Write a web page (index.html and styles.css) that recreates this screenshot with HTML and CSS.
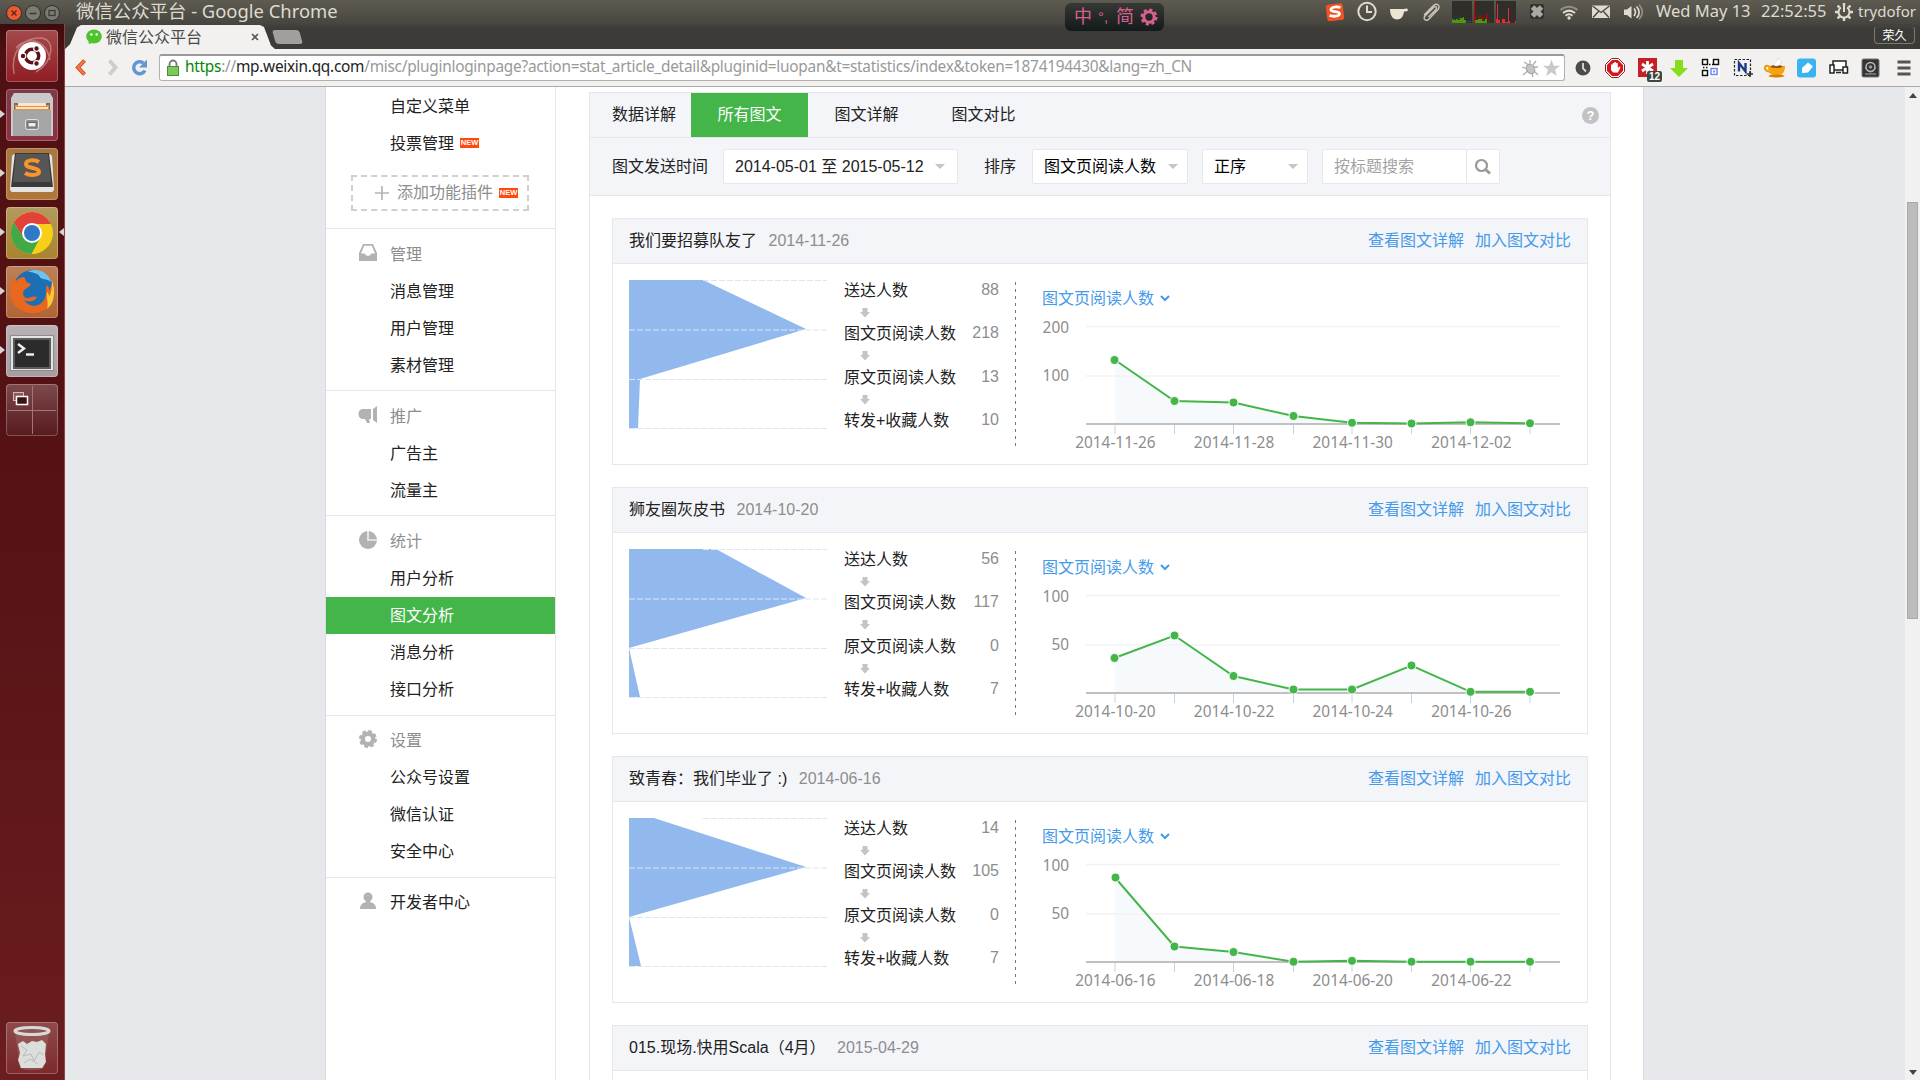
FILE: index.html
```html
<!DOCTYPE html>
<html lang="zh-CN">
<head>
<meta charset="utf-8">
<title>微信公众平台</title>
<link rel="stylesheet" href="styles.css">
</head>
<body>
<svg class="defs" width="0" height="0" aria-hidden="true">
  <symbol id="down" viewBox="0 0 10 10"><path d="M2.500 0h5v4H10L5 9.500 0 4h2.500z" fill="#c4c4c4"/></symbol>
  <symbol id="chev" viewBox="0 0 10 7"><path d="M1 1l4 4 4-4" fill="none" stroke="#459ae9" stroke-width="2"/></symbol>
  <symbol id="grid" viewBox="0 0 198 150"><path d="M74 .5h124M0 50h198M0 99.500h198M0 148.500h198" stroke="#dfe4f5" stroke-width="1.200" stroke-dasharray="6 2"/></symbol>
  <symbol id="axes" viewBox="0 0 476 112">
    <path d="M1 3.500h474M1 53h474" stroke="#f2f2f3" stroke-width="1.500"/>
    <path d="M30 102v9M89.500 102v9M148.500 102v9M208.500 102v9M267 102v9M326.500 102v9M385.500 102v9M445 102v9" stroke="#c3d2e4"/>
    <path d="M1 101h474" stroke="#c0c0c0" stroke-width="2"/>
  </symbol>
</svg>

<header class="panel">
  <div class="winbtns">
    <svg width="56" height="20" viewBox="0 0 56 20"><circle cx="10" cy="9" r="7.500" fill="#ea5c30" stroke="#33302b"/><path d="M7.500 6.500l5 5m0-5l-5 5" stroke="#5b2413" stroke-width="1.300"/><circle cx="29" cy="9" r="7.500" fill="#7d7a72" stroke="#33302b"/><path d="M25.500 9.500h7" stroke="#3c3b37" stroke-width="1.500"/><circle cx="48" cy="9" r="7.500" fill="#7d7a72" stroke="#33302b"/><rect x="45" y="6.500" width="6" height="5" fill="none" stroke="#3c3b37" stroke-width="1.300"/></svg>
  </div>
  <div class="wintitle">微信公众平台 - Google Chrome</div>
  <div class="tray">
    <svg width="32" height="24" viewBox="0 0 32 24"><rect x="7.500" y="4" width="17" height="16.500" rx="2.500" fill="#ee5323" transform="rotate(-7 16 12)"/><path d="M21.500 7.500c-5-1.500-10 0-9.500 2.500.5 2.500 8 .5 8.500 3.500.3 2.500-5 3.500-10 2" stroke="#fff" stroke-width="2.800" fill="none"/></svg>
    <svg width="32" height="24" viewBox="0 0 32 24"><circle cx="16" cy="11.500" r="8.700" fill="none" stroke="#dfdbd2" stroke-width="2"/><path d="M16 5.500v6.500h5" fill="none" stroke="#dfdbd2" stroke-width="2"/></svg>
    <svg width="32" height="24" viewBox="0 0 32 24"><path d="M7 9h14c2-1 4-.5 4 1 0 1.500-2 1.500-4 1.500-.5 5-3 8-7 8s-7-4-7-10.500z" fill="#eae4d0"/></svg>
    <svg width="32" height="24" viewBox="0 0 32 24"><path d="M9 15l9-9c4-4 8 0 5 3.500L14 19c-3 3-6.500 0-4-3l8.500-8.500c2-2 4 0 2.500 2L13.500 17" fill="none" stroke="#c9c5bb" stroke-width="1.400"/></svg>
    <svg width="74" height="24" viewBox="0 0 74 24"><path d="M5 1h20v22H5zM27 1h20v22H27zM49 1h20v22H49z" fill="#2f2e2a"/><path d="M5 23v-4h1v1h3v-1h2v1h2v-2h3v-1h1v3h2v3z" fill="#4e9a06"/><path d="M6 19h2M11 18h2M20 21.500h4" stroke="#204a9c"/><path d="M27.500 23V1" stroke="#cc0000"/><path d="M28 23v-3h3v-1h4v2h3v-2h2v4z" fill="#4e9a06"/><path d="M29 19v-2M33 18v-3M36 20v-3M39.500 19v-5M42 22v-1" stroke="#cc0000" stroke-width="1.500"/><path d="M49 23v-4h1V4h1v16h2v3h2v-4h3v3h3V8h1v13h1v2zM68 23h1v-2h-1z" fill="#ef2929"/></svg>
    <svg width="32" height="24" viewBox="0 0 32 24"><rect x="9" y="4" width="14" height="15" rx="2" fill="#33322e"/><path d="M11.500 7l9 9m0-9l-9 9" stroke="#aaa8a2" stroke-width="5"/></svg>
    <svg width="32" height="24" viewBox="0 0 32 24" fill="none"><path d="M7.500 10c5-4.500 12-4.500 17 0" stroke="#918e86" stroke-width="2"/><path d="M10 13c4-3.200 8-3.200 12 0M12.500 15.700c2.500-2 4.500-2 7 0" stroke="#dfdbd2" stroke-width="2"/><circle cx="16" cy="18" r="1.700" fill="#dfdbd2"/></svg>
    <svg width="32" height="24" viewBox="0 0 32 24"><rect x="7" y="5.500" width="18" height="12.500" fill="#dfdbd2"/><path d="M7.500 6l8.500 6.500L24.500 6M8 17.500l5.500-6M24 17.500l-5.500-6" fill="none" stroke="#45433d" stroke-width="1.300"/></svg>
    <svg width="32" height="24" viewBox="0 0 32 24"><path d="M7 9.500h3L14.500 6v12.500L10 15H7z" fill="#dfdbd2"/><path d="M17 8.500c2 2.500 2 5 0 7.500M19.500 6.500c3.500 3.500 3.500 8 0 11.500" stroke="#dfdbd2" stroke-width="1.700" fill="none"/><path d="M22 4.500c4.500 5 4.500 10 0 15" stroke="#918e86" stroke-width="1.700" fill="none"/></svg>
    <span class="day">Wed May 13</span><span class="clock">22:52:55</span>
    <svg class="gear" width="18" height="24" viewBox="0 0 18 24"><path d="M9 3v3M9 18v3M0 12h3M15 12h3M2.600 5.600l2 2M13.400 16.400l2 2M15.400 5.600l-2 2M4.600 16.400l-2 2" stroke="#dfdbd2" stroke-width="2.400"/><path d="M6 7.500a5.500 5.500 0 1 0 6 0M9 5v7" fill="none" stroke="#dfdbd2" stroke-width="2"/></svg>
    <span class="user">trydofor</span>
  </div>
</header>

<div class="ime"><span>中</span><span class="dot">°,</span><span>简</span><svg width="18" height="18" viewBox="0 0 18 18"><circle cx="9" cy="9" r="7.300" fill="none" stroke="#d95f8f" stroke-width="2.500" stroke-dasharray="3.200 2.530"/><circle cx="9" cy="9" r="5.200" fill="none" stroke="#d95f8f" stroke-width="3"/></svg></div>

<div class="desktop">
  <nav class="launcher">
    <div class="tile dash"><svg width="52" height="52" viewBox="0 0 52 52"><path d="M8 44C4 20 18 8 34 8s14 24-4 34M44 30C40 8 20 6 10 18" fill="none" stroke="#d9a2a2" opacity=".6" stroke-width="1.500"/><circle cx="26" cy="26" r="14" fill="#fff"/><circle cx="26" cy="26" r="6.700" fill="none" stroke="#5e1118" stroke-width="3.400"/><g fill="#5e1118" stroke="#fff" stroke-width="1.200"><circle cx="17" cy="26" r="2.800"/><circle cx="30.500" cy="18.500" r="2.800"/><circle cx="30.500" cy="33.500" r="2.800"/></g></svg></div>
    <div class="tile files run"><svg width="52" height="52" viewBox="0 0 52 52"><path d="M8 4h36l3 5v38H5V9z" fill="#c9c9c9"/><path d="M8 14h36v9H8z" fill="#7c6b60"/><path d="M9 16h34v6H9z" fill="#ef8f3c"/><path d="M12 14h28v3H12zM10 18h32v2H10z" fill="#fbe6cc"/><path d="M7 21h38v26H7z" fill="#a5a5a5"/><rect x="19.500" y="30.500" width="13" height="10" rx="2" fill="#8c8c8c" stroke="#e2e2e2"/><rect x="22" y="33.500" width="8" height="4.500" fill="#eee" stroke="#666"/></svg></div>
    <div class="tile sub run"><svg width="52" height="52" viewBox="0 0 52 52"><path d="M6 8q1-2 3-2h34q2 0 3 2l2 33q0 3-3 3H7q-3 0-3-3z" fill="#e4e4e4"/><path d="M9 5h34l4 34H5z" fill="#3a3a3a"/><path d="M10 6h32l3 28H7z" fill="#565656"/><path d="M33 14c-5-3-13-2-13 2 0 5 13 3 13 7.500 0 4-9 4.500-14 1.500" fill="none" stroke="#f7942b" stroke-width="4"/></svg></div>
    <div class="tile chrome run act"><svg width="52" height="52" viewBox="0 0 52 52"><circle cx="26" cy="26" r="21" fill="#f7cf16"/><path d="M26 17h18.900A21 21 0 0 0 7.800 15.500L17 30z" fill="#e2423a"/><path d="M7.800 15.500A21 21 0 0 0 25.500 47L34 31l-8 4-8-4z" fill="#42a948"/><circle cx="26" cy="26" r="10" fill="#fff"/><circle cx="26" cy="26" r="8" fill="#2f79c6"/></svg></div>
    <div class="tile fox run"><svg width="52" height="52" viewBox="0 0 52 52"><circle cx="27" cy="24" r="20" fill="#1d6fb5"/><path d="M22 6c8-5 21 0 23 10-4-4-10-2-11-5s-7-5-12-5z" fill="#6cc3ee"/><path d="M46 14c5 14 1 31-17 33C10 48 1 33 5 19c0-4 1-7 3-8l2 4c3-3 5-4 8-4 2 2 1 4 4 6 3 0 3 1 2 3l-6 4c-1 3-2 5 2 8 4 1 6-3 11-1-4 7-12 4-13 3 4 7 16 9 21-2 2-6 0-10 2-13 2 2 2 4 2 6 2-4 4-8 3-11z" fill="#e8681f"/><path d="M46 14c4 13 2 24-5 29 2-7-1-10 0-17 2 2 2 3 2 5 3-5 3-11 3-17z" fill="#fcc92f"/></svg></div>
    <div class="tile term run"><svg width="52" height="52" viewBox="0 0 52 52"><rect x="4.500" y="10.500" width="43" height="35" fill="#e4e4e4" stroke="#8c8c8c"/><rect x="7" y="13" width="38" height="31" fill="#5c5c5c"/><rect x="9" y="15" width="34" height="27" fill="#2b2b2b"/><path d="M12 19l6 4.500-6 4.500M20 29.500h8" fill="none" stroke="#eee" stroke-width="2.400"/></svg></div>
    <div class="tile ws"><svg width="52" height="52" viewBox="0 0 52 52"><path d="M26.500 2v48M2 26.500h48" stroke="#a87376"/><rect x="7.500" y="8.500" width="10" height="8" fill="#8a5a5c" stroke="#cbb"/><rect x="10.500" y="12.500" width="11" height="8" fill="#3b1315" stroke="#fff" stroke-width="1.500"/></svg></div>
    <div class="tile trash"><svg width="52" height="52" viewBox="0 0 52 52"><path d="M9 10h34l-5 36c-4 3-20 3-24 0z" fill="#a06462" opacity=".55"/><path d="M12 22l5-3 4 3 5-3 5 1 5-2 4 4-1 10 1 8-4 6H15l-3-8 2-7z" fill="#dcdedb"/><path d="M15 24l6 4-4 6 8-2 3 7 5-9 5 3M18 41l6-4 8 5" fill="none" stroke="#b9bcb9"/><ellipse cx="26" cy="9" rx="17" ry="3.500" fill="#8d5453" stroke="#d7d9d6" stroke-width="3"/></svg></div>
  </nav>

  <div class="browser">
    <div class="tabs">
      <div class="tab"><svg width="16" height="16" viewBox="0 0 16 16"><ellipse cx="8" cy="7.500" rx="7.800" ry="7" fill="#4fc32c"/><path d="M3 12l-.5 3L6 14z" fill="#4fc32c"/><circle cx="5.300" cy="5.500" r="1.200" fill="#fff"/><circle cx="10.700" cy="5.500" r="1.200" fill="#fff"/></svg><span>微信公众平台</span><svg class="close" width="8" height="8" viewBox="0 0 8 8"><path d="M1 1l6 6m0-6L1 7" stroke="#555" stroke-width="1.600"/></svg></div>
      <div class="newtab"></div>
      <div class="profile">荣久</div>
    </div>
    <div class="toolbar">
      <svg width="94" height="36" viewBox="0 0 94 36"><path d="M19.500 10.500L13 17.500l6.500 7" fill="none" stroke="#c9421a" stroke-width="4"/><path d="M19.500 10.500L13 17.500l6.500 7" fill="none" stroke="#f07746" stroke-width="2.500"/><path d="M44.500 10.500l6 7-6 7" fill="none" stroke="#cfcdca" stroke-width="4"/><path d="M80 20.500a6 6 0 1 1-1.500-7.500" fill="none" stroke="#6297d2" stroke-width="3.500"/><path d="M82 9.500v8h-8z" fill="#6297d2"/></svg>
      <div class="omni">
        <svg width="14" height="18" viewBox="0 0 14 18"><path d="M3.500 8V5a3.500 3.500 0 0 1 7 0v3" fill="none" stroke="#777" stroke-width="1.800"/><rect x="1.500" y="7.500" width="11" height="9" fill="#7cc95a" stroke="#4e8d36"/></svg>
        <span class="url"><b class="g">https</b>://<b>mp.weixin.qq.com</b>/misc/pluginloginpage?action=stat_article_detail&amp;pluginid=luopan&amp;t=statistics/index&amp;token=1874194430&amp;lang=zh_CN</span>
        <svg width="40" height="20" viewBox="0 0 40 20"><path d="M3 4l5 3m1-5v4m6-3l-3 4m5 2h-5M1 9l6 2m-5 6l5-4m5 6l-1-4m6 2l-4-4" stroke="#b0b0b0" stroke-width="1.300"/><ellipse cx="9.500" cy="11" rx="4" ry="5" fill="#c4c4c4" stroke="#999" transform="rotate(-35 9.500 11)"/><path d="M30.500 1.500l2.200 6.200H39l-5 4 1.800 6.300-5.300-3.700-5.300 3.700 1.800-6.300-5-4h6.300z" fill="#c9c9c9"/></svg>
      </div>
      <div class="ext">
        <svg width="32" height="24" viewBox="0 0 32 24"><circle cx="16" cy="12" r="7.500" fill="#4b4b4b"/><path d="M16 7v5.500l3 3" fill="none" stroke="#ddd" stroke-width="1.800"/></svg>
        <svg width="32" height="24" viewBox="0 0 32 24"><path d="M12.500 2.500h7l6 6v7l-6 6h-7l-6-6v-7z" fill="#fff" stroke="#8b2222"/><path d="M13 4h6l5 5v6l-5 5h-6l-5-5V9z" fill="#d8141c"/><path d="M12 14V8.500h1.700V7h1.700V6h1.700v1h1.700v5l1.500-1.500 1.200 1L19 16.500H14z" fill="#fff"/></svg>
        <svg width="32" height="28" viewBox="0 0 32 28"><rect x="7" y="4" width="19" height="19" fill="#c71f23"/><path d="M16.500 7v13M11 10l11 7m0-7l-11 7" stroke="#fff" stroke-width="2.800"/><rect x="16" y="17" width="15" height="11" rx="2" fill="#3e4742"/><text x="23.500" y="26" text-anchor="middle" font-size="10" font-weight="700" fill="#fff">12</text></svg>
        <svg width="32" height="24" viewBox="0 0 32 24"><path d="M12 4h8v8h5l-9 9-9-9h5z" fill="#84de1d"/></svg>
        <svg width="32" height="24" viewBox="0 0 32 24"><rect x="6" y="2" width="19" height="19" fill="#fff"/><g fill="none" stroke="#111" stroke-width="1.500"><rect x="7.500" y="3.500" width="5" height="5"/><rect x="18.500" y="3.500" width="5" height="5"/><rect x="7.500" y="14.500" width="5" height="5"/><path d="M14 8.500h4M8 11.500h5" stroke-dasharray="1.500 1.500"/></g><rect x="16" y="12.500" width="6" height="6" fill="none" stroke="#6c8cf0" stroke-width="1.500"/><rect x="18" y="14.500" width="2" height="2" fill="#6c8cf0"/></svg>
        <svg width="32" height="24" viewBox="0 0 32 24"><rect x="7.500" y="3.500" width="16" height="16" fill="none" stroke="#222" stroke-width="1.200" stroke-dasharray="2.500 1.500"/><path d="M12 15.500V7l6.500 8.500V7" stroke="#1b3d8c" stroke-width="2.400" fill="none"/><path d="M24 16v6m-3-3h6" stroke="#333" stroke-width="1.600" transform="translate(-1 -1)"/></svg>
        <svg width="32" height="24" viewBox="0 0 32 24"><path d="M11 11c-5-3-7 1-3 4l4 1" fill="none" stroke="#ec9a0c" stroke-width="2"/><path d="M9 10h17c0 6-3 9-5 9h-7c-3 0-5-4-5-9z" fill="#f7a30f"/><ellipse cx="17.500" cy="20" rx="8" ry="1.500" fill="#d97e06"/><ellipse cx="17.500" cy="10.500" rx="6" ry="1.500" fill="#8b4b0a"/><path d="M16 10c-3-4 3-4 3-8 6 3 3 7-1 8z" fill="#fff" stroke="#ccc" stroke-width=".6"/></svg>
        <svg width="32" height="24" viewBox="0 0 32 24"><rect x="6" y="2.500" width="19" height="19" rx="3" fill="#38b4f0"/><path d="M11 17v-5l6-5.500 5 4-5 6z" fill="#fff"/></svg>
        <svg width="32" height="24" viewBox="0 0 32 24"><g fill="#fff" stroke="#222" stroke-width="1.500"><rect x="10" y="5" width="13" height="9"/><rect x="7" y="9" width="4" height="8"/><rect x="20" y="11" width="4.500" height="6"/><path d="M13 16.500h5"/></g></svg>
        <svg width="32" height="24" viewBox="0 0 32 24"><rect x="7" y="3" width="17" height="18" rx="1.500" fill="#343434" stroke="#777"/><circle cx="15.500" cy="11" r="4.500" fill="none" stroke="#bbb" stroke-width="1.500"/><circle cx="15.500" cy="11" r="1.800" fill="#999"/><path d="M10 12l5.500 4 5.500-4M10 18h11" fill="none" stroke="#aaa"/></svg>
        <svg width="32" height="24" viewBox="0 0 32 24"><path d="M10.500 6h13M10.500 12h13M10.500 18h13" stroke="#555" stroke-width="2.800"/></svg>
      </div>
    </div>

    <div class="viewport">
      <div class="page">
        <aside class="side">
          <section class="first">
            <a>自定义菜单</a><a>投票管理<i class="new">NEW</i></a>
            <div class="add"><svg width="14" height="14" viewBox="0 0 14 14"><path d="M7 0v14M0 7h14" stroke="#b5b5b5" stroke-width="1.700"/></svg><span>添加功能插件</span><i class="new">NEW</i></div>
          </section>
          <section>
            <h4><svg viewBox="0 0 20 20"><path d="M5 1h10l4 9v8H1v-8z" fill="#b2b2b2"/><path d="M6.200 2.800h7.600l3.200 7.700h-4c-.5 3-5.500 3-6 0H3z" fill="#fff"/></svg>管理</h4>
            <a>消息管理</a><a>用户管理</a><a>素材管理</a>
          </section>
          <section>
            <h4><svg viewBox="0 0 20 20"><path d="M5 4h8v10h-2l1 4H9l-2-4H5C-1 14-1 4 5 4zM15 4l4-3v17l-4-3z" fill="#b2b2b2"/></svg>推广</h4>
            <a>广告主</a><a>流量主</a>
          </section>
          <section class="stat">
            <h4><svg viewBox="0 0 20 20"><circle cx="10" cy="10" r="9" fill="#b2b2b2"/><path d="M10 .5v9.500h9.500" fill="none" stroke="#eee" stroke-width="1.700"/></svg>统计</h4>
            <a>用户分析</a><a class="on">图文分析</a><a>消息分析</a><a>接口分析</a>
          </section>
          <section class="up1">
            <h4><svg viewBox="0 0 20 20"><circle cx="10" cy="10" r="7.800" fill="none" stroke="#b2b2b2" stroke-width="2.400" stroke-dasharray="3.630 2.500"/><circle cx="10" cy="10" r="5.300" fill="none" stroke="#b2b2b2" stroke-width="4.500"/></svg>设置</h4>
            <a>公众号设置</a><a>微信认证</a><a>安全中心</a>
          </section>
          <section class="up1">
            <h4 class="dark"><svg viewBox="0 0 20 20"><circle cx="10" cy="6" r="4.500" fill="#b2b2b2"/><path d="M8 9h4v2c4 1 6 3 6 7H2c0-4 2-6 6-7z" fill="#b2b2b2"/></svg>开发者中心</h4>
          </section>
        </aside>

        <main class="main">
          <div class="navrow"><span class="name">数据详解</span><a class="on">所有图文</a><a>图文详解</a><a>图文对比</a><span class="help">?</span></div>
          <div class="filters">
            <span class="lbl">图文发送时间</span>
            <div class="box date">2014-05-01 至 2015-05-12<i></i></div>
            <span class="lbl sort">排序</span>
            <div class="box s1">图文页阅读人数<i></i></div>
            <div class="box s2">正序<i></i></div>
            <div class="box search">按标题搜索</div>
            <div class="box go"><svg width="18" height="18" viewBox="0 0 18 18"><circle cx="7.500" cy="7.500" r="5.500" fill="none" stroke="#999" stroke-width="2.200"/><path d="M11.500 11.500l4.500 4" stroke="#999" stroke-width="3"/></svg></div>
          </div>
          <div class="cards">
            <article class="card">
              <div class="head"><span>我们要招募队友了</span><time>2014-11-26</time><a>查看图文详解</a><a>加入图文对比</a></div>
              <div class="body">
                <svg class="funnel" viewBox="0 0 198 150"><path d="M0 0H74L177 49 11 99 9 148H0z" fill="#91b9ee"/><use href="#grid"/></svg>
                <dl><div><dt>送达人数</dt><dd>88</dd></div><svg><use href="#down"/></svg><div><dt>图文页阅读人数</dt><dd>218</dd></div><svg><use href="#down"/></svg><div><dt>原文页阅读人数</dt><dd>13</dd></div><svg><use href="#down"/></svg><div><dt>转发+收藏人数</dt><dd>10</dd></div></dl>
                <div class="trend">
                  <div class="pick">图文页阅读人数<svg><use href="#chev"/></svg></div>
                  <div class="plot"><div class="ys"><span>200</span><span>100</span></div>
                  <svg class="line" viewBox="0 0 476 112"><path d="M30 37L89.500 78 148.500 80 208.500 93 267 100V101H30z" fill="#f7fafc"/><use href="#axes"/><polyline points="30,37 89.500,78 148.500,79.500 208.500,93 267,99.800 326.500,100.500 385.500,99.300 445,100.300"/><g><circle cx="29.500" cy="37" r="4.500"/><circle cx="89.500" cy="78" r="4.500"/><circle cx="148.500" cy="79.500" r="4.500"/><circle cx="208.500" cy="93" r="4.500"/><circle cx="267" cy="99.800" r="4.500"/><circle cx="326.500" cy="100.500" r="4.500"/><circle cx="385.500" cy="99.300" r="4.500"/><circle cx="445" cy="100.300" r="4.500"/></g></svg></div>
                  <div class="xs"><span>2014-11-26</span><span>2014-11-28</span><span>2014-11-30</span><span>2014-12-02</span></div>
                </div>
              </div>
            </article>
            <article class="card">
              <div class="head"><span>狮友圈灰皮书</span><time>2014-10-20</time><a>查看图文详解</a><a>加入图文对比</a></div>
              <div class="body">
                <svg class="funnel" viewBox="0 0 198 150"><path d="M0 0H87L177 49 0 99 11 148H0z" fill="#91b9ee"/><use href="#grid"/></svg>
                <dl><div><dt>送达人数</dt><dd>56</dd></div><svg><use href="#down"/></svg><div><dt>图文页阅读人数</dt><dd>117</dd></div><svg><use href="#down"/></svg><div><dt>原文页阅读人数</dt><dd>0</dd></div><svg><use href="#down"/></svg><div><dt>转发+收藏人数</dt><dd>7</dd></div></dl>
                <div class="trend">
                  <div class="pick">图文页阅读人数<svg><use href="#chev"/></svg></div>
                  <div class="plot"><div class="ys"><span>100</span><span>50</span></div>
                  <svg class="line" viewBox="0 0 476 112"><path d="M30 66L89.500 43.500 148.500 84 208.500 98H267L326.500 73.500 385.500 100V101H30z" fill="#f7fafc"/><use href="#axes"/><polyline points="29.500,66 89.500,43.500 148.500,84 208.500,97.500 267,97.500 326.500,73.500 385.500,99.800 445,99.800"/><g><circle cx="29.500" cy="66" r="4.500"/><circle cx="89.500" cy="43.500" r="4.500"/><circle cx="148.500" cy="84" r="4.500"/><circle cx="208.500" cy="97.500" r="4.500"/><circle cx="267" cy="97.500" r="4.500"/><circle cx="326.500" cy="73.500" r="4.500"/><circle cx="385.500" cy="99.800" r="4.500"/><circle cx="445" cy="99.800" r="4.500"/></g></svg></div>
                  <div class="xs"><span>2014-10-20</span><span>2014-10-22</span><span>2014-10-24</span><span>2014-10-26</span></div>
                </div>
              </div>
            </article>
            <article class="card">
              <div class="head"><span>致青春：我们毕业了 :)</span><time>2014-06-16</time><a>查看图文详解</a><a>加入图文对比</a></div>
              <div class="body">
                <svg class="funnel" viewBox="0 0 198 150"><path d="M0 0H25L177 49 0 99 12 148H0z" fill="#91b9ee"/><use href="#grid"/></svg>
                <dl><div><dt>送达人数</dt><dd>14</dd></div><svg><use href="#down"/></svg><div><dt>图文页阅读人数</dt><dd>105</dd></div><svg><use href="#down"/></svg><div><dt>原文页阅读人数</dt><dd>0</dd></div><svg><use href="#down"/></svg><div><dt>转发+收藏人数</dt><dd>7</dd></div></dl>
                <div class="trend">
                  <div class="pick">图文页阅读人数<svg><use href="#chev"/></svg></div>
                  <div class="plot"><div class="ys"><span>100</span><span>50</span></div>
                  <svg class="line" viewBox="0 0 476 112"><path d="M30 16.500L89.500 85.500 148.500 91 208.500 100.500V101H30z" fill="#f7fafc"/><use href="#axes"/><polyline points="30,16.500 89.500,85.500 148.500,91 208.500,100.700 267,99.800 326.500,100.700 385.500,100.700 445,100.700"/><g><circle cx="30.500" cy="16.500" r="4.500"/><circle cx="89.500" cy="85.500" r="4.500"/><circle cx="148.500" cy="91" r="4.500"/><circle cx="208.500" cy="100.700" r="4.500"/><circle cx="267" cy="99.800" r="4.500"/><circle cx="326.500" cy="100.700" r="4.500"/><circle cx="385.500" cy="100.700" r="4.500"/><circle cx="445" cy="100.700" r="4.500"/></g></svg></div>
                  <div class="xs"><span>2014-06-16</span><span>2014-06-18</span><span>2014-06-20</span><span>2014-06-22</span></div>
                </div>
              </div>
            </article>
            <article class="card">
              <div class="head"><span>015.现场.快用Scala<span class="paren" lang="zh-TW">（</span>4月<span class="paren" lang="zh-TW">）</span></span><time>2015-04-29</time><a>查看图文详解</a><a>加入图文对比</a></div>
            </article>
          </div>
        </main>
      </div>
      <div class="scroll"><i class="up"></i><b></b><i class="dn"></i></div>
    </div>
  </div>
</div>
</body>
</html>
```
FILE: styles.css
```css
* { box-sizing: border-box; }
body { margin: 0; width: 1920px; height: 1080px; overflow: hidden; display: flex; flex-direction: column; background: #3c3b37; font: 16px/24px "Liberation Sans", "Noto Sans CJK SC", sans-serif; color: #222; }
svg { display: block; flex: none; }
.defs { position: absolute; }
h4, dl, dd { margin: 0; font-weight: 400; }
i, b { font-style: normal; font-weight: 400; }

.panel { height: 24px; flex: none; display: flex; align-items: center; background: linear-gradient(#5e5b51, #47453f); color: #dfdbd2; font-family: "Noto Sans", "Noto Sans CJK SC", sans-serif; white-space: nowrap; }
.winbtns { width: 76px; padding: 3px 0 0 4px; }
.wintitle { font-size: 18.400px; line-height: 24px; padding-bottom: 2px; }
.tray { margin-left: auto; display: flex; align-items: center; height: 24px; padding-right: 6px; font-size: 16.500px; }
.day, .clock, .user { padding-bottom: 2px; }
.day { width: 105px; margin-left: 7px; }
.clock { width: 70px; }
.gear { margin: 0 5px 0 4px; }
.user { width: 56px; font-size: 15px; }

.ime { position: absolute; left: 1065px; top: 3px; width: 99px; height: 28px; border-radius: 6px; background: linear-gradient(#363934, #131a1a); color: #d95f8f; display: flex; align-items: center; gap: 6px; padding-left: 9px; font-size: 18px; }
.ime .dot { width: 12px; font-size: 15px; }

.desktop { flex: 1; display: flex; min-height: 0; }
.launcher { width: 65px; flex: none; background: linear-gradient(#3d0b0d, #511013 3%, #561215 45%, #6b1d1f); border-right: 1px solid #8b4547; padding: 6px; display: flex; flex-direction: column; gap: 7px; }
.tile { width: 52px; height: 52px; flex: none; border-radius: 4px; position: relative; box-shadow: inset 0 0 0 1px rgba(255,255,255,.25); }
.dash { background: linear-gradient(#a34a4c, #8f1d24); }
.files { background: linear-gradient(#7e3a48, #8c3040); }
.sub { background: linear-gradient(#a8773f, #b0763a); }
.chrome { background: linear-gradient(#b39a60, #a8842c); }
.fox { background: linear-gradient(#bd8058, #b06435); }
.term { background: linear-gradient(#b8b2b6, #a59da2); }
.ws { background: linear-gradient(#7d4a4c, #571a1d); }
.trash { margin-top: auto; background: linear-gradient(#90494a, #7a2b2c); }
.run::before, .act::after { content: ""; position: absolute; left: -6px; top: 21px; border: 4px solid transparent; border-left: 5px solid #d8d4d4; border-right: 0; }
.act::after { left: 53px; border-left: 0; border-right: 5px solid #d8d4d4; }

.browser { flex: 1; display: flex; flex-direction: column; min-width: 0; }
.tabs { height: 25px; flex: none; display: flex; padding-top: 1px; background: linear-gradient(#45433e, #3c3b37 20%); font-family: "Noto Sans CJK SC", sans-serif; }
.tab { width: 210px; height: 24px; background: #f2f1f0; clip-path: polygon(0 100%, 5px 80%, 12px 10%, 16px 0, 195px 0, 199px 8%, 206px 85%, 210px 100%); display: flex; align-items: center; padding: 0 0 1px 21px; gap: 4px; color: #4a4a4a; }
.tab span { margin-top: -2px; }
.close { margin-left: auto; margin-right: 16px; }
.newtab { width: 27px; height: 14px; margin: 5px 0 0 -1px; background: #a09f9c; transform: skewX(16deg); border-radius: 3px; }
.profile { margin: 1px 5px 0 auto; width: 41px; height: 18px; border: 1px solid #7a7871; border-top-color: #45433e; border-radius: 4px; color: #fff; font-size: 12px; line-height: 15px; text-align: center; }
.toolbar { height: 38px; flex: none; background: #f2f1f0; border-bottom: 1px solid #aaa; display: flex; align-items: center; }
.omni { width: 1406px; height: 27px; background: #fff; border: 1px solid #b3b1ae; border-top: 2px solid #999; border-radius: 3px; display: flex; align-items: center; padding: 0 3px 0 6px; }
.url { flex: 1; margin: -2px 0 0 5px; color: #999; font-family: "Noto Sans", sans-serif; font-size: 15.400px; letter-spacing: -.27px; white-space: nowrap; line-height: 24px; }
.url b { color: #222; }
.url .g { color: #080; }
.ext { display: flex; align-items: center; padding-left: 2px; }

.viewport { flex: 1; min-height: 0; display: flex; background: #e7e8eb; overflow: hidden; }
.page { margin-left: 260px; width: 1319px; display: flex; background: #fff; border: solid #d9dadc; border-width: 0 1px; }
.side { width: 230px; border-right: 1px solid #e7e7eb; flex: none; font-family: "Noto Sans CJK SC", sans-serif; color: #222; }
.side section { border-top: 1px solid #e7e7eb; padding: 7px 0 6px; }
.side .first { border: 0; padding: 1px 0 17px; }
.side .stat { padding-bottom: 7px; }
.side .up1 { padding: 6px 0 7px; }
.side a { display: flex; align-items: center; height: 37px; padding: 0 0 3px 64px; }
.side a.on { background: #44b549; color: #fff; }
.side h4 { height: 37px; display: flex; align-items: center; color: #8d8d8d; padding: 0 0 3px 32px; }
.side h4 svg { width: 20px; height: 20px; margin-right: 12px; }
.side h4.dark { color: #222; }
.side .add { margin: 13px 0 0 25px; width: 178px; height: 36px; border: 2px dashed #d0d0d0; display: flex; align-items: center; padding-left: 22px; color: #8d8d8d; }
.add svg { margin-right: 8px; }
.add span { margin-top: -4px; }
.new { background: #ff4a0c; color: #fff; font: 700 7.500px/10px "Liberation Sans", sans-serif; width: 19px; height: 10px; text-align: center; margin: 1px 0 0 6px; }
.add .new { margin-top: -1px; }

.main { width: 1022px; margin: 5px 0 0 33px; border: 1px solid #e7e7eb; border-bottom: 0; overflow: hidden; }
.navrow { height: 45px; background: #f4f5f9; border-bottom: 1px solid #e7e7eb; display: flex; line-height: 44px; }
.name { width: 101px; padding-left: 22px; }
.navrow a { width: 117px; text-align: center; }
.navrow .on { background: #44b549; color: #fff; }
.help { margin: 14px 11px 0 auto; width: 17px; height: 17px; border-radius: 50%; background: #c2c2c2; color: #fff; font: 700 13px/17px "Liberation Sans", sans-serif; text-align: center; }
.filters { height: 58px; background: #f4f5f9; border-bottom: 1px solid #e7e7eb; display: flex; align-items: center; padding-left: 22px; }
.lbl { margin-right: 15px; }
.sort { margin: 0 16px 0 -1px; }
.box { height: 35px; background: #fff; border: 1px solid #e7e7eb; border-radius: 2px; display: flex; align-items: center; justify-content: space-between; padding: 0 9px 0 11px; color: #000; white-space: nowrap; }
.box i { border: 5px solid transparent; border-top-color: #c5c5c5; border-bottom: 0; }
.date { width: 235px; margin-right: 27px; color: #222; padding-right: 12px; }
.s1 { width: 156px; margin-right: 14px; }
.s2 { width: 106px; margin-right: 14px; }
.search { width: 145px; color: #a3a3a3; border-radius: 2px 0 0 2px; }
.go { width: 33px; border-left: 0; padding: 0 7px; }

.cards { padding: 22px 22px 0; display: flex; flex-direction: column; gap: 22px; }
.card { height: 247px; flex: none; border: 1px solid #e7e7eb; }
.head { height: 45px; background: #f4f5f9; border-bottom: 1px solid #e7e7eb; display: flex; align-items: center; padding: 0 16px; white-space: nowrap; }
.head time { color: #8d8d8d; margin: 0 auto 0 11.500px; }
.paren { font-family: "Noto Sans CJK TC", sans-serif; line-height: 1; }
.head a, .pick { color: #459ae9; }
.head a + a { margin-left: 11px; }
.body { display: flex; padding: 16px 0 0 16px; }
.funnel { width: 198px; height: 150px; }
dl { width: 172px; height: 169px; margin-left: 17px; padding-right: 17px; background: repeating-linear-gradient(transparent 0 2px, #777 2px 5px, transparent 5px 7px) right / 1px 100% no-repeat; }
dl div { display: flex; justify-content: space-between; height: 22px; align-items: center; white-space: nowrap; }
dl svg { width: 10px; height: 10px; margin: 6px 0 5.300px 16px; }
dd { color: #8d8d8d; margin-top: -2px; }
.trend { margin-left: 26px; font-family: "Noto Sans", "Noto Sans CJK SC", sans-serif; color: #8d8d8d; }
.pick { display: flex; align-items: center; height: 33px; font-family: "Noto Sans CJK SC", sans-serif; }
.pick svg { width: 10px; height: 7px; margin: 3px 0 0 6px; }
.plot { display: flex; margin-top: 10px; }
.ys { width: 27px; margin-right: 16px; font-size: 15.400px; line-height: 20px; margin-top: -5px; text-align: right; }
.ys span { display: block; height: 48px; }
.line { width: 476px; height: 112px; }
.line polyline { fill: none; stroke: #44b549; stroke-width: 2; }
.line circle { fill: #44b549; stroke: #fff; }
.xs { display: flex; margin: -2px 0 0 14px; font-size: 15.400px; line-height: 20px; }
.xs span { width: 118.700px; text-align: center; }

.scroll { margin-left: auto; width: 15px; background: #f1f1f1; display: flex; flex-direction: column; align-items: center; }
.scroll b { width: 11px; height: 417px; margin-top: 104px; background: #bcbcbc; border: 1px solid #a9a9a9; }
.scroll i { border: 4px solid transparent; }
.up { margin-top: 6px; border-bottom: 5px solid #444 !important; border-top: 0 !important; }
.dn { margin: auto 0 5px; border-top: 5px solid #444 !important; border-bottom: 0 !important; }
```
